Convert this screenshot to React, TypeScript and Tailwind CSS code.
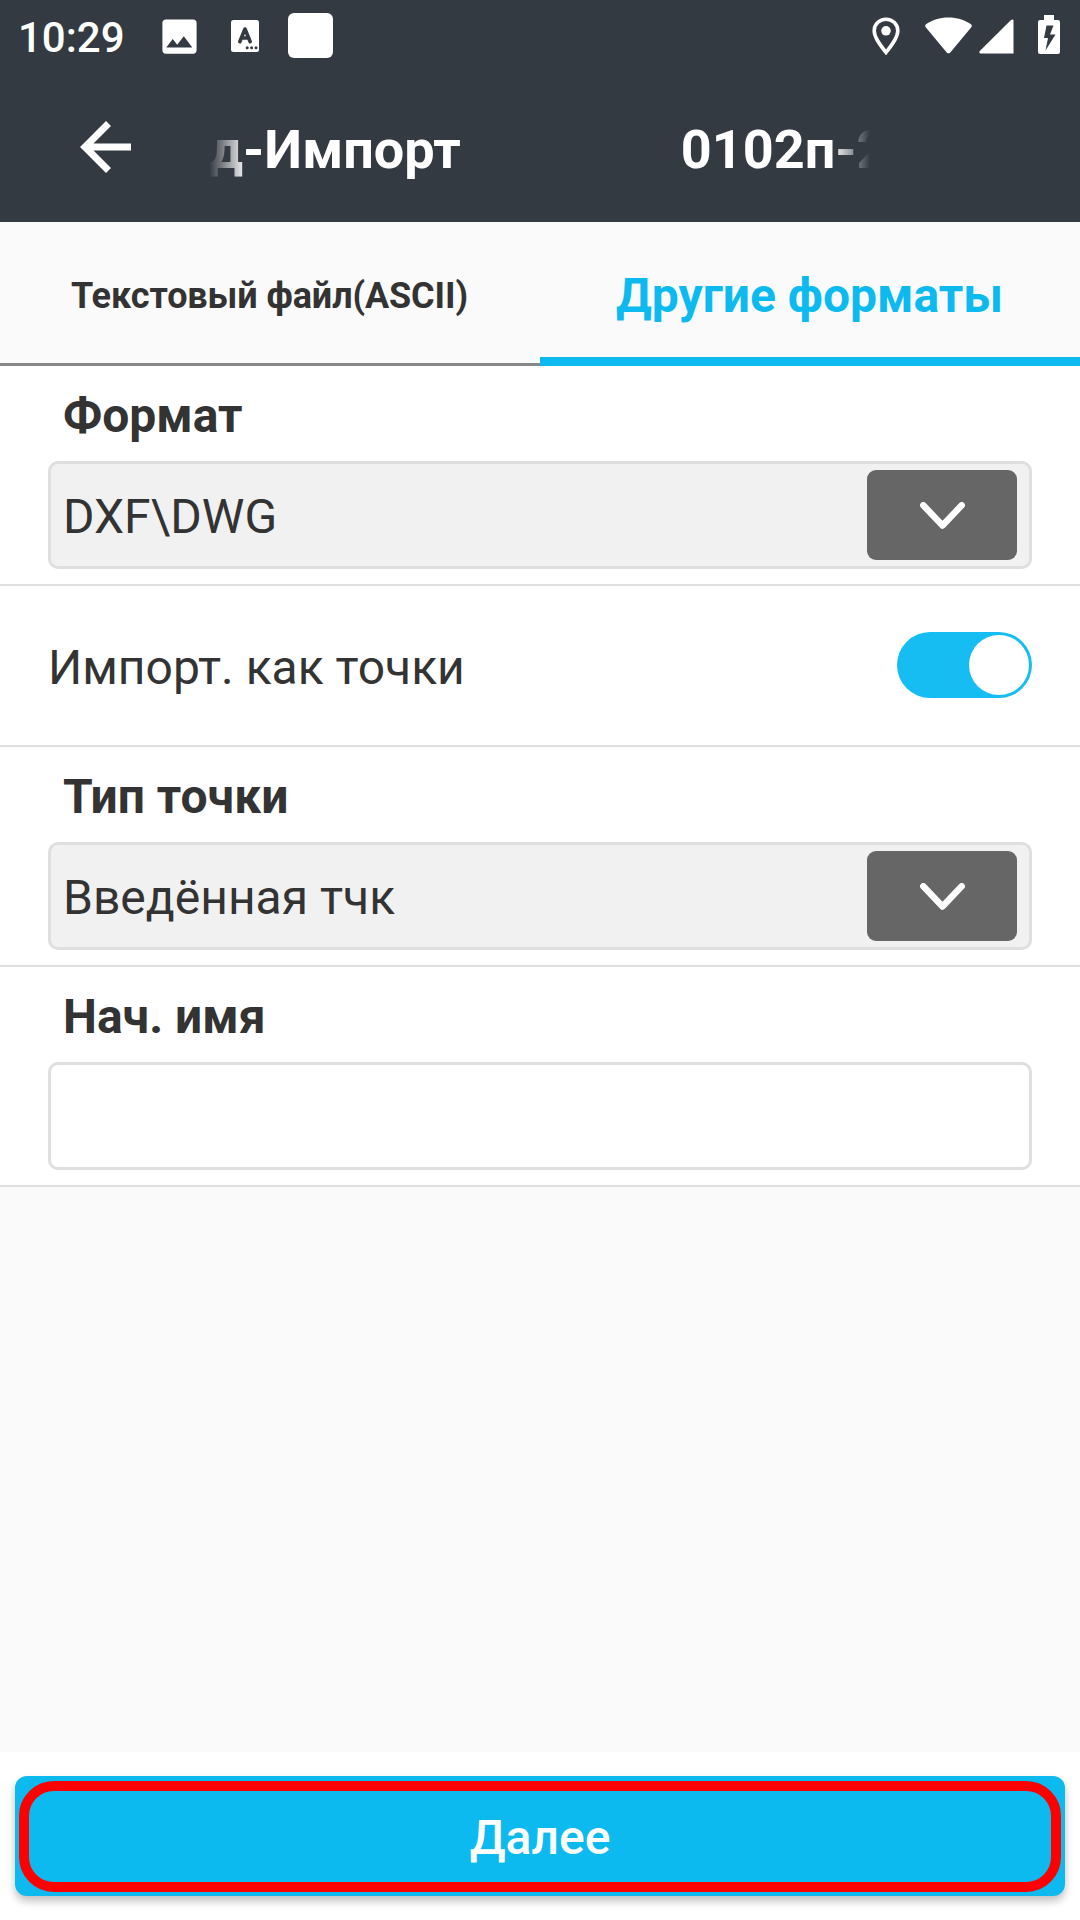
import { useState } from 'react';

interface SelectFieldProps {
  label: string;
  value: string;
}

function StatusBar() {
  return (
    <div className="flex h-[72px] items-center justify-between pl-[18px] pr-5 text-white">
      <div className="flex items-center">
        <span className="w-[144px] pt-[3px] text-[42px] leading-none font-medium">10:29</span>
        <svg className="h-[35px] w-[35px]" viewBox="0 0 35 35" fill="currentColor">
          <path
            fillRule="evenodd"
            d="M4 .5h27a3.600 3.600 0 0 1 3.600 3.600v27a3.600 3.600 0 0 1-3.600 3.600H4a3.600 3.600 0 0 1-3.600-3.600v-27A3.600 3.600 0 0 1 4 .5zM4.300 28.500h26L21.800 17.200l-6.600 8.600-4.500-5.800z"
          />
        </svg>
        <svg className="ml-[34px] h-[32px] w-[28px]" viewBox="0 0 28 32">
          <rect width="28" height="32" rx="2.500" fill="#fff" />
          <path
            d="M8.800 21.700L14 9l5.200 12.700M10.500 18h7"
            fill="none"
            stroke="#343a42"
            strokeWidth="3.600"
            strokeLinecap="round"
            strokeLinejoin="round"
          />
          <circle cx="16.200" cy="27.800" r="1.500" fill="#343a42" />
          <circle cx="20.600" cy="27.800" r="1.500" fill="#343a42" />
          <circle cx="25" cy="27.800" r="1.500" fill="#343a42" />
        </svg>
        <div className="mb-px ml-[29px] h-[45px] w-[45px] rounded-[6px] bg-white" />
      </div>
      <div className="flex items-center">
        <svg className="h-[38px] w-[28px]" viewBox="0 0 28 38">
          <path
            d="M14 2.200C7.400 2.200 2.200 7.300 2.200 13.800c0 3 1.200 6 3 9.200 2.600 4.500 5.800 8.700 8.800 12.500 3-3.800 6.200-8 8.800-12.500 1.800-3.200 3-6.200 3-9.200C25.800 7.300 20.600 2.200 14 2.200z"
            fill="none"
            stroke="#fff"
            strokeWidth="3.600"
          />
          <circle cx="14" cy="13.800" r="4.800" fill="#fff" />
        </svg>
        <svg className="mb-[2px] ml-[25px] h-[37px] w-[47px]" viewBox="0 0 47 37" fill="currentColor">
          <path d="M1 7.300C7 3 15 .5 23.500 .5S40 3 46 7.300c1 .8 1.100 1.900 .3 2.900L25.300 35.400c-1 1.200-2.600 1.200-3.600 0L.7 10.200C-.1 9.200 0 8.100 1 7.300z" />
        </svg>
        <svg className="ml-[7px] h-[35px] w-[35px]" viewBox="0 0 35 35" fill="currentColor">
          <path d="M34.500 1.500v33H1.600C.3 34.500 0 33 .8 32.100L32 .9c1-.9 2.500-.6 2.500 .6z" />
        </svg>
        <svg className="mb-[3px] ml-6 h-[39px] w-[22px]" viewBox="0 0 22 39" fill="currentColor">
          <path
            fillRule="evenodd"
            d="M6 0h10v5h4a2 2 0 0 1 2 2v30a2 2 0 0 1-2 2H2a2 2 0 0 1-2-2V7a2 2 0 0 1 2-2h4zM8.500 10.500L6 23h4L7.500 35.500 17.500 19.500H12L15.500 10.500z"
          />
        </svg>
      </div>
    </div>
  );
}

function Header() {
  return (
    <header className="h-[222px] bg-[#343a42]">
      <StatusBar />
      <div className="flex h-[150px] items-center text-white">
        <button className="ml-[80px] w-[129px]" aria-label="Назад">
          <svg className="h-[52px] w-[52px]" viewBox="0 0 52 52" fill="none" stroke="currentColor" strokeWidth="7">
            <path d="M28.500 2.500L5 26l23.500 23.500M5 26h46" />
          </svg>
        </button>
        <div className="flex w-[661px] gap-[220px] overflow-hidden pt-[5px] text-[54px] leading-[64px] font-bold whitespace-nowrap [mask-image:linear-gradient(to_right,transparent,black_38px,black_calc(100%_-_38px),transparent)]">
          <span>д-Импорт</span>
          <span>0102п-2</span>
        </div>
      </div>
    </header>
  );
}

function SelectField({ label, value }: SelectFieldProps) {
  return (
    <section className="h-[220px] border-b-2 border-[#dfdfdf] bg-white px-12">
      <div className="flex h-[95px] items-center pt-1 pl-[15px] text-[48px] font-bold">{label}</div>
      <div className="flex h-[108px] items-center justify-between rounded-[10px] border-3 border-[#dfdfdf] bg-[#f1f1f1] pr-3 pl-3">
        <span className="pt-[3px] text-[48px] leading-none">{value}</span>
        <button className="flex h-[90px] w-[150px] items-center justify-center rounded-[9px] bg-[#666]" aria-label={label}>
          <svg className="h-[27px] w-[45px]" viewBox="0 0 45 27" fill="none" stroke="#fff" strokeWidth="6.500">
            <path d="M3.300 3.300l19.200 20.200L41.700 3.300" strokeLinecap="round" strokeLinejoin="round" />
          </svg>
        </button>
      </div>
    </section>
  );
}

export default function App() {
  const [asPoints, setAsPoints] = useState(true);
  const [startName, setStartName] = useState('');

  return (
    <div className="flex h-[1920px] w-[1080px] flex-col bg-[#fafafa] font-[Roboto,sans-serif] text-[#333]">
      <Header />

      <nav className="flex h-[144px] font-bold">
        <button className="w-1/2 border-b-3 border-[#888] pt-[6px] pr-px text-[36px] tracking-[-0.1px]">
          Текстовый файл(ASCII)
        </button>
        <button className="w-1/2 border-b-9 border-[#0dbaf0] pt-3 pr-px text-[48px] text-[#0dbaf0]">
          Другие форматы
        </button>
      </nav>

      <main className="flex-1">
        <SelectField label="Формат" value="DXF\DWG" />

        <section className="flex h-[161px] items-center justify-between border-b-2 border-[#dfdfdf] bg-white px-12 pb-[2px]">
          <span className="pt-[6px] text-[48px] leading-none">Импорт. как точки</span>
          <button
            role="switch"
            aria-checked={asPoints}
            aria-label="Импорт. как точки"
            onClick={() => setAsPoints(!asPoints)}
            className={`flex h-[66px] w-[135px] items-center rounded-full p-[3px] ${
              asPoints ? 'justify-end bg-[#16bdf2]' : 'justify-start bg-[#bbb]'
            }`}
          >
            <span className="h-[60px] w-[60px] rounded-full bg-white" />
          </button>
        </section>

        <SelectField label="Тип точки" value="Введённая тчк" />

        <section className="h-[220px] border-b-2 border-[#dfdfdf] bg-white px-12">
          <label htmlFor="start-name" className="flex h-[95px] items-center pt-1 pl-[15px] text-[48px] font-bold">
            Нач. имя
          </label>
          <input
            id="start-name"
            value={startName}
            onChange={(e) => setStartName(e.target.value)}
            className="block h-[108px] w-full rounded-[10px] border-3 border-[#dfdfdf] px-3 text-[48px] outline-none"
          />
        </section>
      </main>

      <footer className="h-[168px] bg-white px-[15px] pt-6">
        <button className="h-[120px] w-full rounded-[12px] bg-[#0dbaf0] px-1 pt-[5px] pb-1 text-[48px] font-medium text-white shadow-[0_5px_9px_rgba(0,0,0,0.25)]">
          <span className="flex h-[111px] items-center justify-center rounded-[35px] border-10 border-[#f00] pt-[3px]">
            Далее
          </span>
        </button>
      </footer>
    </div>
  );
}
